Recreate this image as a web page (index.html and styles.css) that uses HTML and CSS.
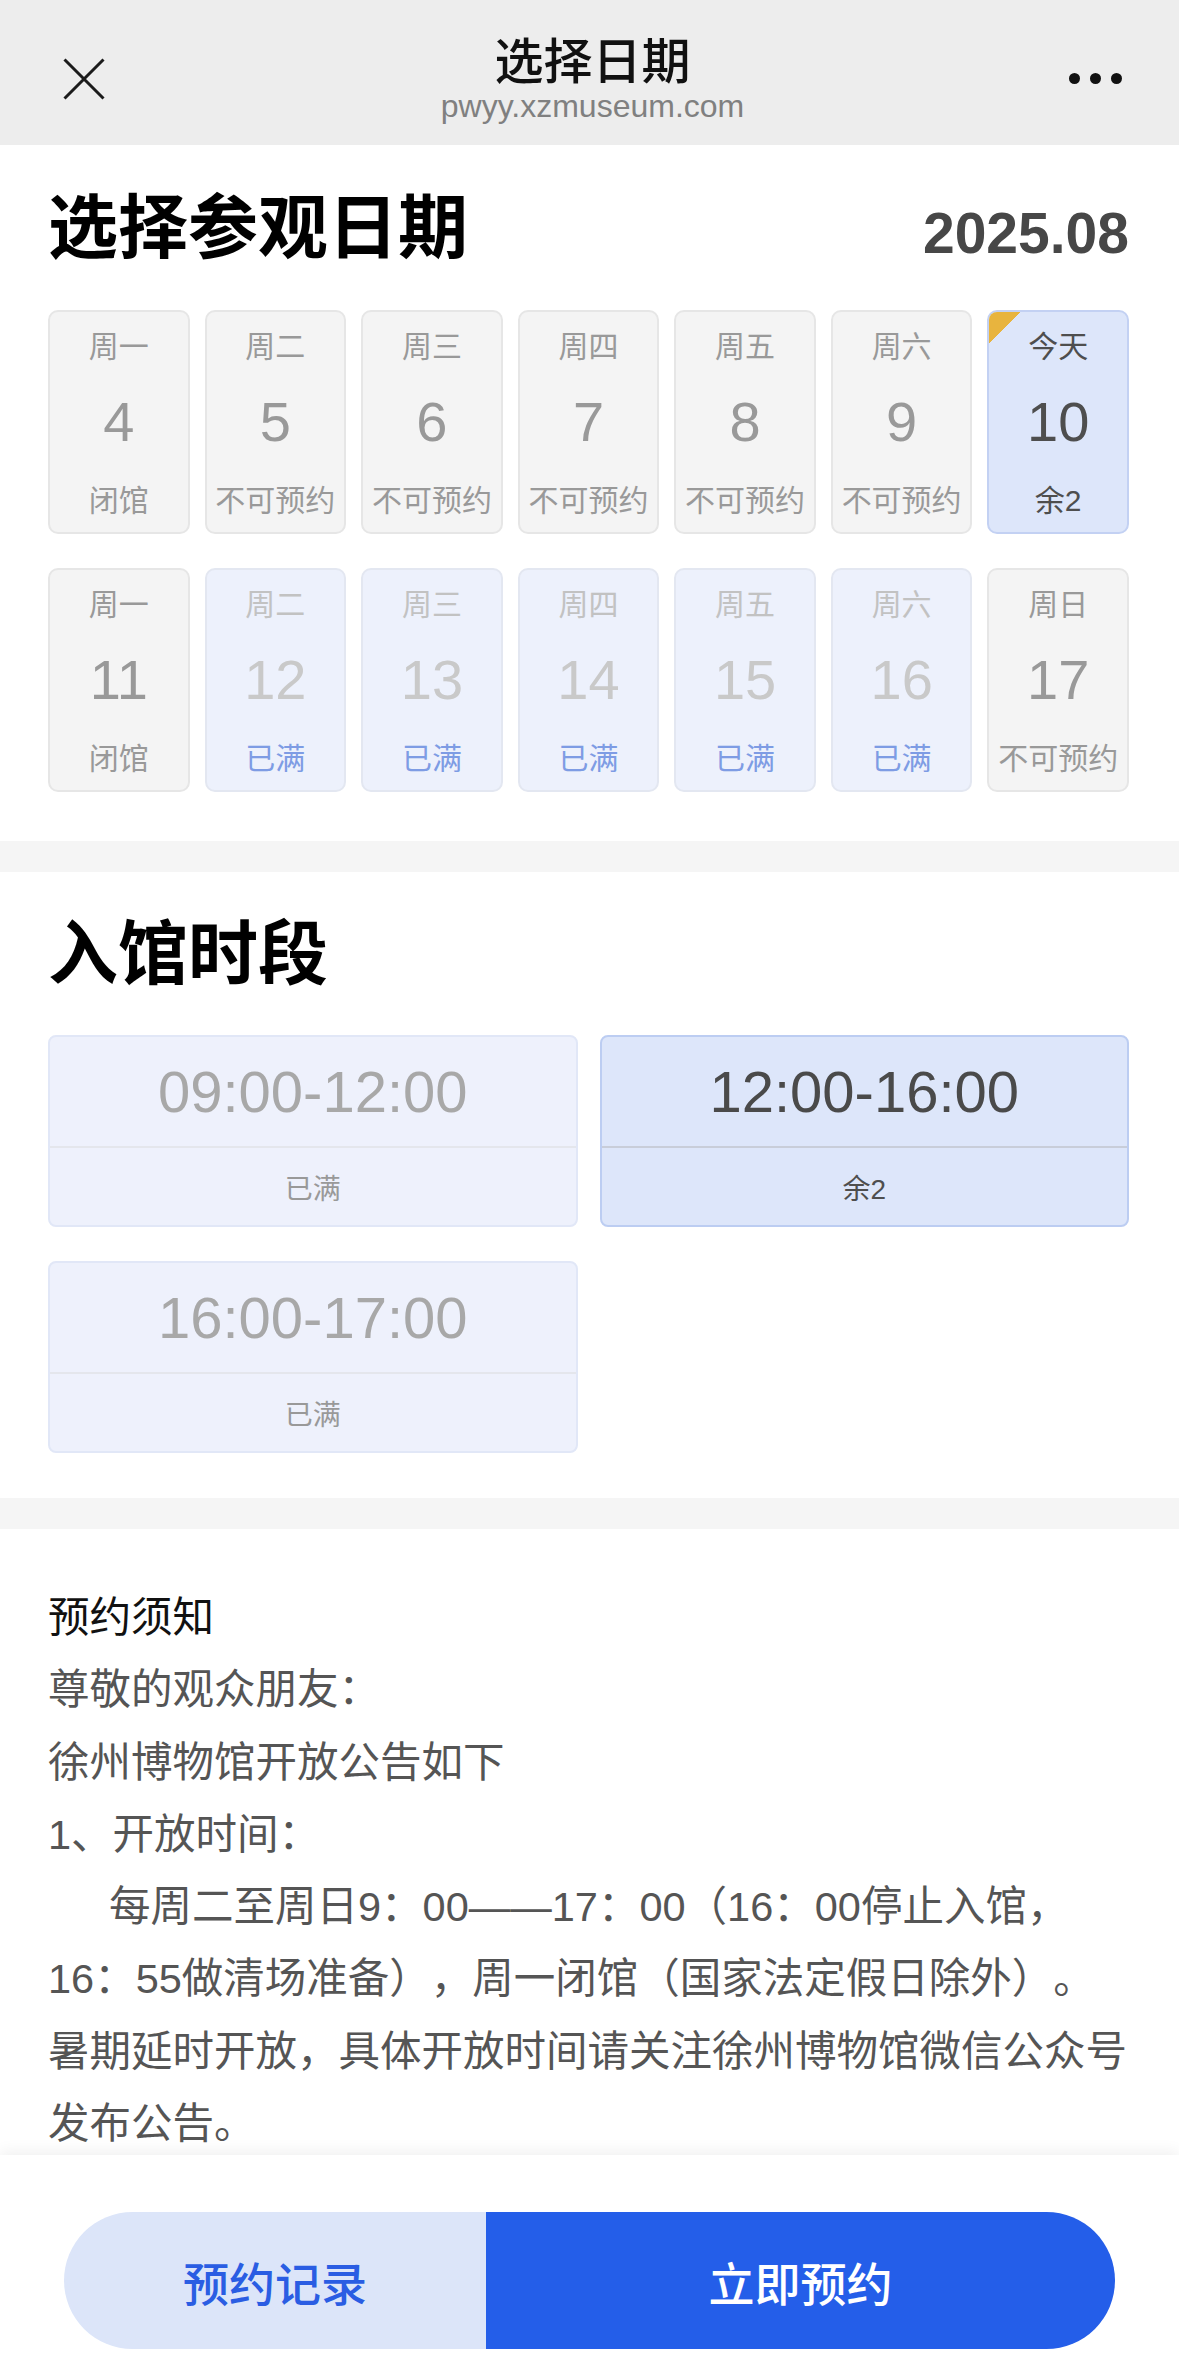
FILE: index.html
```html
<!DOCTYPE html>
<html lang="zh-CN">
<head>
<meta charset="utf-8">
<title>选择日期</title>
<link rel="stylesheet" href="styles.css">
</head>
<body>
<header class="navbar">
  <div class="nav-left">
    <svg class="icon-close" viewBox="0 0 42 42" aria-hidden="true"><path d="M1.5 1.5 L40.5 40.5 M40.5 1.5 L1.5 40.5"/></svg>
  </div>
  <div class="nav-title">
    <div class="nav-name">选择日期</div>
    <div class="nav-url">pwyy.xzmuseum.com</div>
  </div>
  <div class="nav-right">
    <span class="dot"></span><span class="dot"></span><span class="dot"></span>
  </div>
</header>

<main class="page">
  <section class="panel date-panel">
    <div class="panel-head">
      <h1 class="panel-title">选择参观日期</h1>
      <div class="month">2025.08</div>
    </div>
    <div class="date-grid">
      <div class="day day-off"><span class="wk">周一</span><span class="num">4</span><span class="st">闭馆</span></div>
      <div class="day day-off"><span class="wk">周二</span><span class="num">5</span><span class="st">不可预约</span></div>
      <div class="day day-off"><span class="wk">周三</span><span class="num">6</span><span class="st">不可预约</span></div>
      <div class="day day-off"><span class="wk">周四</span><span class="num">7</span><span class="st">不可预约</span></div>
      <div class="day day-off"><span class="wk">周五</span><span class="num">8</span><span class="st">不可预约</span></div>
      <div class="day day-off"><span class="wk">周六</span><span class="num">9</span><span class="st">不可预约</span></div>
      <div class="day day-today"><span class="wk">今天</span><span class="num">10</span><span class="st">余2</span></div>
      <div class="day day-off"><span class="wk">周一</span><span class="num">11</span><span class="st">闭馆</span></div>
      <div class="day day-full"><span class="wk">周二</span><span class="num">12</span><span class="st">已满</span></div>
      <div class="day day-full"><span class="wk">周三</span><span class="num">13</span><span class="st">已满</span></div>
      <div class="day day-full"><span class="wk">周四</span><span class="num">14</span><span class="st">已满</span></div>
      <div class="day day-full"><span class="wk">周五</span><span class="num">15</span><span class="st">已满</span></div>
      <div class="day day-full"><span class="wk">周六</span><span class="num">16</span><span class="st">已满</span></div>
      <div class="day day-off"><span class="wk">周日</span><span class="num">17</span><span class="st">不可预约</span></div>
    </div>
  </section>

  <section class="panel time-panel">
    <div class="panel-head">
      <h2 class="panel-title">入馆时段</h2>
    </div>
    <div class="time-grid">
      <div class="slot slot-full"><div class="slot-time">09:00-12:00</div><div class="slot-st">已满</div></div>
      <div class="slot slot-on"><div class="slot-time">12:00-16:00</div><div class="slot-st">余2</div></div>
      <div class="slot slot-full"><div class="slot-time">16:00-17:00</div><div class="slot-st">已满</div></div>
    </div>
  </section>

  <section class="panel notice">
    <p class="notice-title">预约须知</p>
    <p>尊敬的观众朋友：</p>
    <p>徐州博物馆开放公告如下</p>
    <p>1、开放时间：</p>
    <p class="indent">每周二至周日9：00——17：00（16：00停止入馆，16：55做清场准备），周一闭馆（国家法定假日除外）。</p>
    <p>暑期延时开放，具体开放时间请关注徐州博物馆微信公众号发布公告。</p>
  </section>
</main>

<footer class="action-bar">
  <div class="btn-group">
    <button class="btn btn-record" type="button">预约记录</button>
    <button class="btn btn-book" type="button">立即预约</button>
  </div>
</footer>
</body>
</html>
```

FILE: styles.css
```css
* { box-sizing: border-box; }

html, body {
  margin: 0;
  padding: 0;
}

body {
  background: #f5f5f5;
  font-family: "Liberation Sans", "Noto Sans CJK SC", sans-serif;
  color: #333;
  padding-bottom: 220px;
}

/* ---------- nav bar ---------- */
.navbar {
  height: 145px;
  background: #ededed;
  display: grid;
  grid-template-columns: 1fr auto 1fr;
  align-items: start;
  padding: 0 57px 0 63px;
}

.nav-left { margin-top: 58px; }

.icon-close {
  display: block;
  width: 42px;
  height: 42px;
  stroke: #1b1b1b;
  stroke-width: 3;
  fill: none;
}

.nav-title {
  margin-top: 30px;
  text-align: center;
}

.nav-name {
  font-family: "Noto Sans CJK SC", sans-serif;
  font-size: 49px;
  font-weight: 500;
  line-height: 56px;
  color: #111;
}

.nav-url {
  font-size: 32px;
  line-height: 36px;
  color: #808080;
  margin-top: 2px;
}

.nav-right {
  margin-top: 73px;
  justify-self: end;
  display: flex;
  gap: 10px;
}

.dot {
  width: 11px;
  height: 11px;
  border-radius: 50%;
  background: #111;
}

/* ---------- panels ---------- */
.page {
  display: flex;
  flex-direction: column;
  gap: 31px;
}

.panel {
  background: #fff;
  padding: 0 50px 0 48px;
}

.panel-head {
  display: flex;
  justify-content: space-between;
  align-items: baseline;
}

.panel-title {
  margin: 0;
  font-family: "Noto Sans CJK SC", sans-serif;
  font-size: 70px;
  font-weight: 700;
  line-height: 84px;
  color: #000;
}

.month {
  font-size: 57px;
  font-weight: 700;
  color: #474747;
}

.date-panel { padding-top: 36px; padding-bottom: 49px; }
.time-panel { padding-top: 35px; padding-bottom: 45px; }

/* ---------- date grid ---------- */
.date-grid {
  margin-top: 44px;
  display: grid;
  grid-template-columns: repeat(7, 1fr);
  column-gap: 15px;
  row-gap: 34px;
}

.day {
  position: relative;
  overflow: hidden;
  height: 224px;
  border: 2px solid #e6e6e6;
  border-radius: 10px;
  background: #f4f4f4;
  display: flex;
  flex-direction: column;
  align-items: center;
  padding-top: 15px;
  color: #999;
}

.wk, .st {
  font-size: 30px;
  line-height: 40px;
  white-space: nowrap;
}

.num {
  font-size: 56px;
  line-height: 64px;
  margin: 23px 0 27px;
}

.day-full {
  background: #edf1fc;
  border-color: #e3e7f1;
}
.day-full .wk { color: #c2c2c2; }
.day-full .num { color: #c9c9c9; }
.day-full .st { color: #7e9ce4; }

.day-today {
  background: #dde6fa;
  border-color: #c3d1f3;
  color: #4e4e4e;
}

.day-today::before {
  content: "";
  position: absolute;
  top: 0;
  left: 0;
  width: 31px;
  height: 31px;
  background: linear-gradient(135deg, #e8b43e 50%, transparent 50%);
}

/* ---------- time grid ---------- */
.time-grid {
  margin-top: 44px;
  display: grid;
  grid-template-columns: 1fr 1fr;
  column-gap: 22px;
  row-gap: 34px;
}

.slot {
  border: 2px solid #e1e7f7;
  border-radius: 8px;
  background: #eef1fc;
  display: flex;
  flex-direction: column;
}

.slot-time {
  height: 111px;
  display: flex;
  align-items: center;
  justify-content: center;
  font-size: 58px;
  color: #a8a8a8;
  border-bottom: 2px solid #e4e6ec;
}

.slot-st {
  height: 77px;
  display: flex;
  align-items: center;
  justify-content: center;
  font-size: 28px;
  color: #999;
}

.slot-on {
  background: #dde6fa;
  border-color: #bccdf2;
}
.slot-on .slot-time {
  color: #4a4a4a;
  border-bottom-color: #c8cdd9;
}
.slot-on .slot-st { color: #4e4e4e; }

/* ---------- notice ---------- */
.notice {
  padding: 53px 48px 40px;
  font-size: 41.5px;
  line-height: 72.3px;
  color: #555;
  text-spacing-trim: space-all;
}

.notice p { margin: 0; }

.notice-title { color: #111; }

.indent { text-indent: 61px; }

/* ---------- bottom action bar ---------- */
.action-bar {
  position: fixed;
  left: 0;
  right: 0;
  bottom: 0;
  height: 206px;
  background: #fff;
  box-shadow: 0 -4px 14px rgba(0, 0, 0, 0.06);
  padding: 57px 64px 12px;
}

.btn-group {
  display: flex;
  height: 137px;
  border-radius: 69px;
  overflow: hidden;
}

.btn {
  border: 0;
  margin: 0;
  padding: 0;
  font-family: "Noto Sans CJK SC", sans-serif;
  font-size: 46px;
  font-weight: 500;
  cursor: pointer;
}

.btn-record {
  flex: 0 0 422px;
  background: #dce5f9;
  color: #2a5de3;
}

.btn-book {
  flex: 1;
  background: #245ee9;
  color: #fff;
}
```
